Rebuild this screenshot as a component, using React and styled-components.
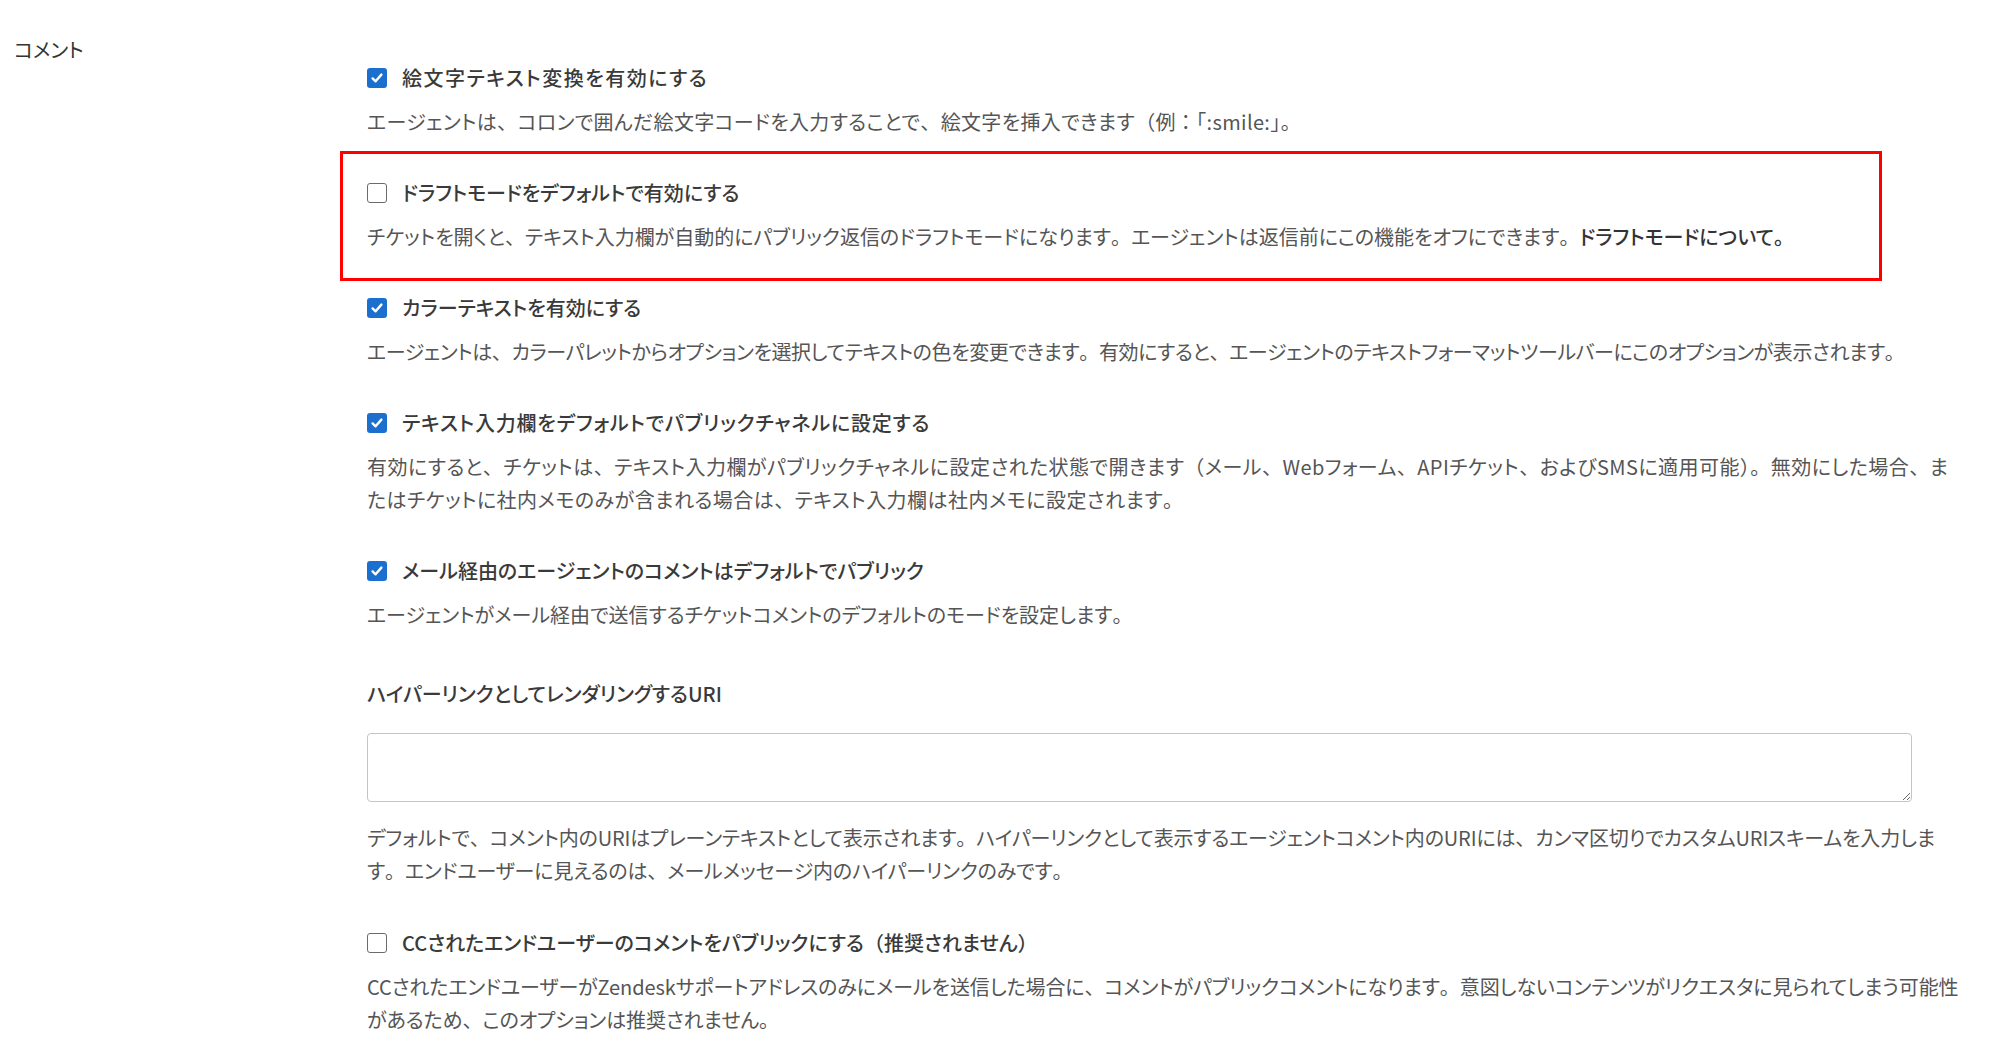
import React from "react";
import styled, { createGlobalStyle } from "styled-components";

const Global = createGlobalStyle`
  html, body { margin: 0; padding: 0; background: #ffffff; }
  body {
    font-family: "Noto Sans CJK JP", "Noto Sans", sans-serif;
    font-feature-settings: "palt" 1;
    color: #3a3a3a;
  }
`;

const Page = styled.div`
  display: grid;
  grid-template-columns: 367px 1fr;
  width: 2000px;
  min-height: 1050px;
  box-sizing: border-box;
`;

const SectionTitle = styled.div`
  padding: 33px 0 0 14px;
  font-size: 20px;
  line-height: 33px;
  color: #333;
`;

const Content = styled.div`
  padding: 61px 0 0 0;
  display: flex;
  flex-direction: column;
`;

const Item = styled.div`
  position: relative;
  margin-bottom: ${(p) => p.$mb ?? 38}px;
`;

const Highlight = styled.div`
  position: absolute;
  left: -27px;
  top: -25px;
  bottom: -28px;
  width: 1542px;
  border: 3px solid #ff0000;
  box-sizing: border-box;
  pointer-events: none;
`;

const LabelRow = styled.label`
  display: flex;
  align-items: center;
  gap: 15px;
  height: 33px;
`;

const Box = styled.span`
  flex: none;
  width: 20px;
  height: 20px;
  box-sizing: border-box;
  border-radius: 3px;
  display: inline-flex;
  align-items: center;
  justify-content: center;
  background: ${(p) => (p.$checked ? "#1b6fcf" : "#ffffff")};
  border: ${(p) => (p.$checked ? "none" : "1.5px solid #6b6b6b")};
`;

const LabelText = styled.span`
  font-size: 20px;
  font-weight: 500;
  color: #3a3a3a;
  line-height: 33px;
  white-space: nowrap;
  letter-spacing: ${(p) => p.$ls ?? 0}px;
`;

const Desc = styled.p`
  margin: 11px 0 0;
  font-size: 20px;
  line-height: 33px;
  color: #555555;
  white-space: nowrap;
  letter-spacing: ${(p) => p.$ls ?? 0}px;
`;

const Punct = styled.span`
  font-feature-settings: "palt" 0;
`;

const Strong = styled.span`
  font-weight: 500;
  color: #333333;
`;

const FieldLabel = styled.div`
  margin-top: 8px;
  font-size: 20px;
  font-weight: 500;
  line-height: 33px;
  color: #3a3a3a;
`;

const TextArea = styled.textarea`
  display: block;
  margin-top: 23px;
  width: 1545px;
  height: 69px;
  box-sizing: border-box;
  border: 1.5px solid #c4c4c4;
  border-radius: 4px;
  resize: vertical;
  font-family: inherit;
  font-size: 19px;
  outline: none;
`;

const FieldDesc = styled(Desc)`
  margin-top: 19px;
`;

// Full-width punctuation, as the reference's UI font renders it.
function jp(text) {
  return text.split(/([、。（）「」：])/).map((part, i) =>
    /^[、。（）「」：]$/.test(part) ? <Punct key={i}>{part}</Punct> : part
  );
}

function Checkbox({ checked }) {
  return (
    <Box $checked={checked}>
      {checked && (
        <svg width="14" height="14" viewBox="0 0 14 14">
          <path
            d="M2.6 7.4 L5.6 10.3 L11.4 3.6"
            fill="none"
            stroke="#fff"
            strokeWidth="2.4"
            strokeLinecap="round"
            strokeLinejoin="round"
          />
        </svg>
      )}
    </Box>
  );
}

function Option({ checked, label, children, highlight, mb, ls, lls }) {
  return (
    <Item $mb={mb}>
      {highlight && <Highlight />}
      <LabelRow>
        <Checkbox checked={checked} />
        <LabelText $ls={lls}>{jp(label)}</LabelText>
      </LabelRow>
      <Desc $ls={ls}>{children}</Desc>
    </Item>
  );
}

export default function App() {
  return (
    <>
      <Global />
      <Page>
        <SectionTitle>コメント</SectionTitle>
        <Content>
          <Option checked ls={0.35} lls={1.5} label="絵文字テキスト変換を有効にする">
            {jp("エージェントは、コロンで囲んだ絵文字コードを入力することで、絵文字を挿入できます（例：「:smile:」。")}
          </Option>
          <Option highlight checked={false} label="ドラフトモードをデフォルトで有効にする">
            {jp("チケットを開くと、テキスト入力欄が自動的にパブリック返信のドラフトモードになります。エージェントは返信前にこの機能をオフにできます。")}
            <Strong>{jp("ドラフトモードについて。")}</Strong>
          </Option>
          <Option checked ls={-0.4} label="カラーテキストを有効にする">
            {jp("エージェントは、カラーパレットからオプションを選択してテキストの色を変更できます。有効にすると、エージェントのテキストフォーマットツールバーにこのオプションが表示されます。")}
          </Option>
          <Option checked ls={0.45} lls={0.8} label="テキスト入力欄をデフォルトでパブリックチャネルに設定する">
            {jp("有効にすると、チケットは、テキスト入力欄がパブリックチャネルに設定された状態で開きます（メール、Webフォーム、APIチケット、およびSMSに適用可能）。無効にした場合、ま")}
            <br />
            {jp("たはチケットに社内メモのみが含まれる場合は、テキスト入力欄は社内メモに設定されます。")}
          </Option>
          <Option checked label="メール経由のエージェントのコメントはデフォルトでパブリック">
            {jp("エージェントがメール経由で送信するチケットコメントのデフォルトのモードを設定します。")}
          </Option>
          <Item $mb={39}>
            <FieldLabel>ハイパーリンクとしてレンダリングするURI</FieldLabel>
            <TextArea />
            <FieldDesc $ls={-0.15}>
              {jp("デフォルトで、コメント内のURIはプレーンテキストとして表示されます。ハイパーリンクとして表示するエージェントコメント内のURIには、カンマ区切りでカスタムURIスキームを入力しま")}
              <br />
              {jp("す。エンドユーザーに見えるのは、メールメッセージ内のハイパーリンクのみです。")}
            </FieldDesc>
          </Item>
          <Option checked={false} ls={-0.1} label="CCされたエンドユーザーのコメントをパブリックにする（推奨されません）">
            {jp("CCされたエンドユーザーがZendeskサポートアドレスのみにメールを送信した場合に、コメントがパブリックコメントになります。意図しないコンテンツがリクエスタに見られてしまう可能性")}
            <br />
            {jp("があるため、このオプションは推奨されません。")}
          </Option>
        </Content>
      </Page>
    </>
  );
}
